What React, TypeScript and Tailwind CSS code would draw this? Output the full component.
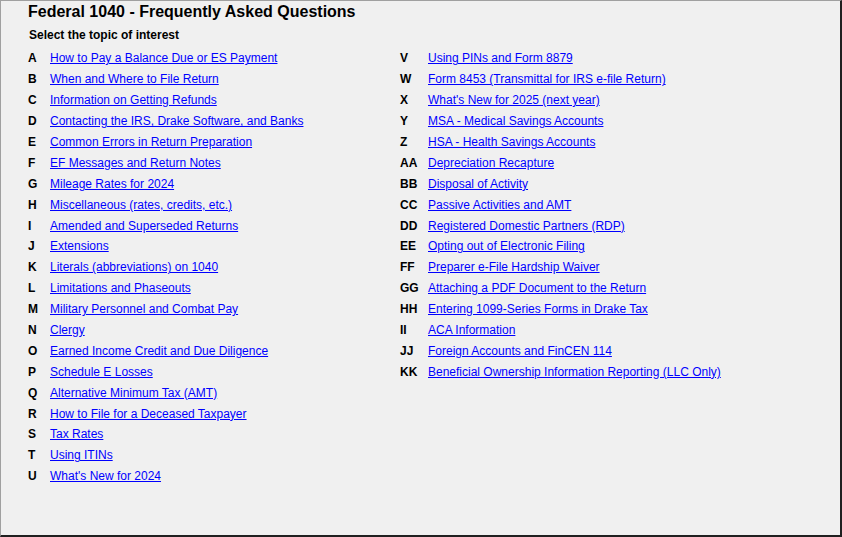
import React from "react";

const left: [string, string][] = [
  ["A", "How to Pay a Balance Due or ES Payment"],
  ["B", "When and Where to File Return"],
  ["C", "Information on Getting Refunds"],
  ["D", "Contacting the IRS, Drake Software, and Banks"],
  ["E", "Common Errors in Return Preparation"],
  ["F", "EF Messages and Return Notes"],
  ["G", "Mileage Rates for 2024"],
  ["H", "Miscellaneous (rates, credits, etc.)"],
  ["I", "Amended and Superseded Returns"],
  ["J", "Extensions"],
  ["K", "Literals (abbreviations) on 1040"],
  ["L", "Limitations and Phaseouts"],
  ["M", "Military Personnel and Combat Pay"],
  ["N", "Clergy"],
  ["O", "Earned Income Credit and Due Diligence"],
  ["P", "Schedule E Losses"],
  ["Q", "Alternative Minimum Tax (AMT)"],
  ["R", "How to File for a Deceased Taxpayer"],
  ["S", "Tax Rates"],
  ["T", "Using ITINs"],
  ["U", "What's New for 2024"],
];

const right: [string, string][] = [
  ["V", "Using PINs and Form 8879"],
  ["W", "Form 8453 (Transmittal for IRS e-file Return)"],
  ["X", "What's New for 2025 (next year)"],
  ["Y", "MSA - Medical Savings Accounts"],
  ["Z", "HSA - Health Savings Accounts"],
  ["AA", "Depreciation Recapture"],
  ["BB", "Disposal of Activity"],
  ["CC", "Passive Activities and AMT"],
  ["DD", "Registered Domestic Partners (RDP)"],
  ["EE", "Opting out of Electronic Filing"],
  ["FF", "Preparer e-File Hardship Waiver"],
  ["GG", "Attaching a PDF Document to the Return"],
  ["HH", "Entering 1099-Series Forms in Drake Tax"],
  ["II", "ACA Information"],
  ["JJ", "Foreign Accounts and FinCEN 114"],
  ["KK", "Beneficial Ownership Information Reporting (LLC Only)"],
];

function Row({ k, label, kw }: { k: string; label: string; kw: string }) {
  return (
    <div className="flex items-center h-[20.9px]">
      <span className={`${kw} font-bold text-black`}>{k}</span>
      <a href="#" className="text-[#0000ff] underline underline-offset-[1px]">
        {label}
      </a>
    </div>
  );
}

export default function App() {
  return (
    <div
      className="w-[842px] h-[537px] bg-[#f0f0f0] border-t border-l border-t-[#a0a0a0] border-l-[#a0a0a0] border-r-2 border-b-2 border-r-[#202020] border-b-[#202020] text-[12px] leading-[14px] pl-[27px]"
      style={{ fontFamily: '"Liberation Sans", Arial, sans-serif' }}
    >
      <h1 className="text-[16px] leading-[18px] font-bold text-black pt-[2px]">
        Federal 1040 - Frequently Asked Questions
      </h1>
      <div className="font-bold text-black mt-[7px] ml-[1px]">Select the topic of interest</div>
      <div className="flex mt-[6px]">
        <div className="w-[372px] flex flex-col">
          {left.map(([k, l]) => (
            <Row key={k} k={k} label={l} kw="w-[22px]" />
          ))}
        </div>
        <div className="flex flex-col">
          {right.map(([k, l]) => (
            <Row key={k} k={k} label={l} kw="w-[28px]" />
          ))}
        </div>
      </div>
    </div>
  );
}
